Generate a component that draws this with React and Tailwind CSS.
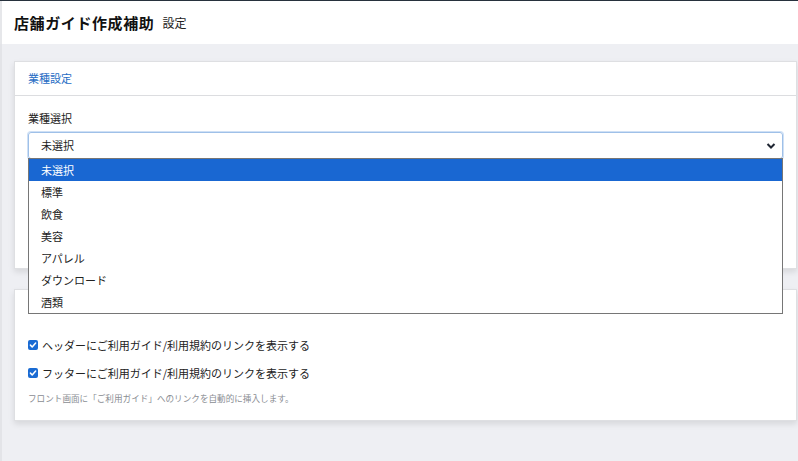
import React from "react";

const font = { fontFamily: '"Noto Sans CJK JP", "Noto Sans", sans-serif' };

function Check() {
  return (
    <span className="w-[10px] h-[10px] rounded-[2px] bg-[#1a6bd3] flex items-center justify-center shrink-0">
      <svg width="8" height="8" viewBox="0 0 10 10">
        <path d="M1.8 5.2 L4 7.4 L8.3 2.6" fill="none" stroke="white" strokeWidth="1.9" strokeLinecap="round" strokeLinejoin="round" />
      </svg>
    </span>
  );
}

export default function App() {
  const options = ["未選択", "標準", "飲食", "美容", "アパレル", "ダウンロード", "酒類"];
  return (
    <div className="w-[798px] h-[461px] overflow-hidden bg-[#eeeff3] flex flex-col border-t border-[#27313d] text-[#222]" style={font}>
      <div className="h-[43px] bg-white flex items-center pl-[12px] border-l-2 border-[#e6e7ea] shrink-0">
        <span className="text-[15px] font-bold tracking-[0.6px] leading-none text-[#111]">店舗ガイド作成補助</span>
        <span className="text-[12px] ml-[8px] leading-none text-[#222]">設定</span>
      </div>
      <div className="flex-1 flex flex-col gap-[20px] pt-[17px] pl-[12px] pr-[1px] border-l-2 border-[#e3e4e8]">
        <div className="bg-white border border-[#dedfe2] shadow-[0_3px_6px_rgba(0,0,0,0.10)] h-[208px] flex flex-col">
          <div className="h-[34px] flex items-center px-[13px] border-b border-[#dcdde0] text-[11px] text-[#1f6cc4]">業種設定</div>
          <div className="px-[13px] pt-[17px]">
            <div className="text-[11px] leading-none mb-[8px]">業種選択</div>
            <div className="relative">
              <div className="h-[27px] border border-[#9fc0e8] rounded-[3px] shadow-[0_0_0_1px_#cfe0f5] flex items-center justify-between pl-[12px] pr-[6px] text-[11px]">
                <span>未選択</span>
                <svg width="10" height="8" viewBox="0 0 10 8">
                  <path d="M1.5 2 L5 5.5 L8.5 2" fill="none" stroke="#1f2633" strokeWidth="2" />
                </svg>
              </div>
              <div className="absolute left-0 right-0 top-[26px] z-10 bg-white border border-[#767676] flex flex-col text-[11px]">
                {options.map((o, i) => (
                  <div key={o} className={"h-[22px] flex items-center pl-[12px] " + (i === 0 ? "bg-[#1967d2] text-white" : "text-[#222]")}>
                    {o}
                  </div>
                ))}
              </div>
            </div>
          </div>
        </div>
        <div className="bg-white border border-[#dedfe2] shadow-[0_3px_6px_rgba(0,0,0,0.10)] h-[132px] flex flex-col px-[13px] pt-[48px]">
          <div className="flex items-center gap-[4px] text-[11px] h-[14px]">
            <Check />
            <span>ヘッダーにご利用ガイド/利用規約のリンクを表示する</span>
          </div>
          <div className="flex items-center gap-[4px] text-[11px] h-[14px] mt-[14px]">
            <Check />
            <span>フッターにご利用ガイド/利用規約のリンクを表示する</span>
          </div>
          <div className="text-[8.6px] text-[#8a8d93] mt-[14px] leading-none">フロント画面に「ご利用ガイド」へのリンクを自動的に挿入します。</div>
        </div>
      </div>
    </div>
  );
}
